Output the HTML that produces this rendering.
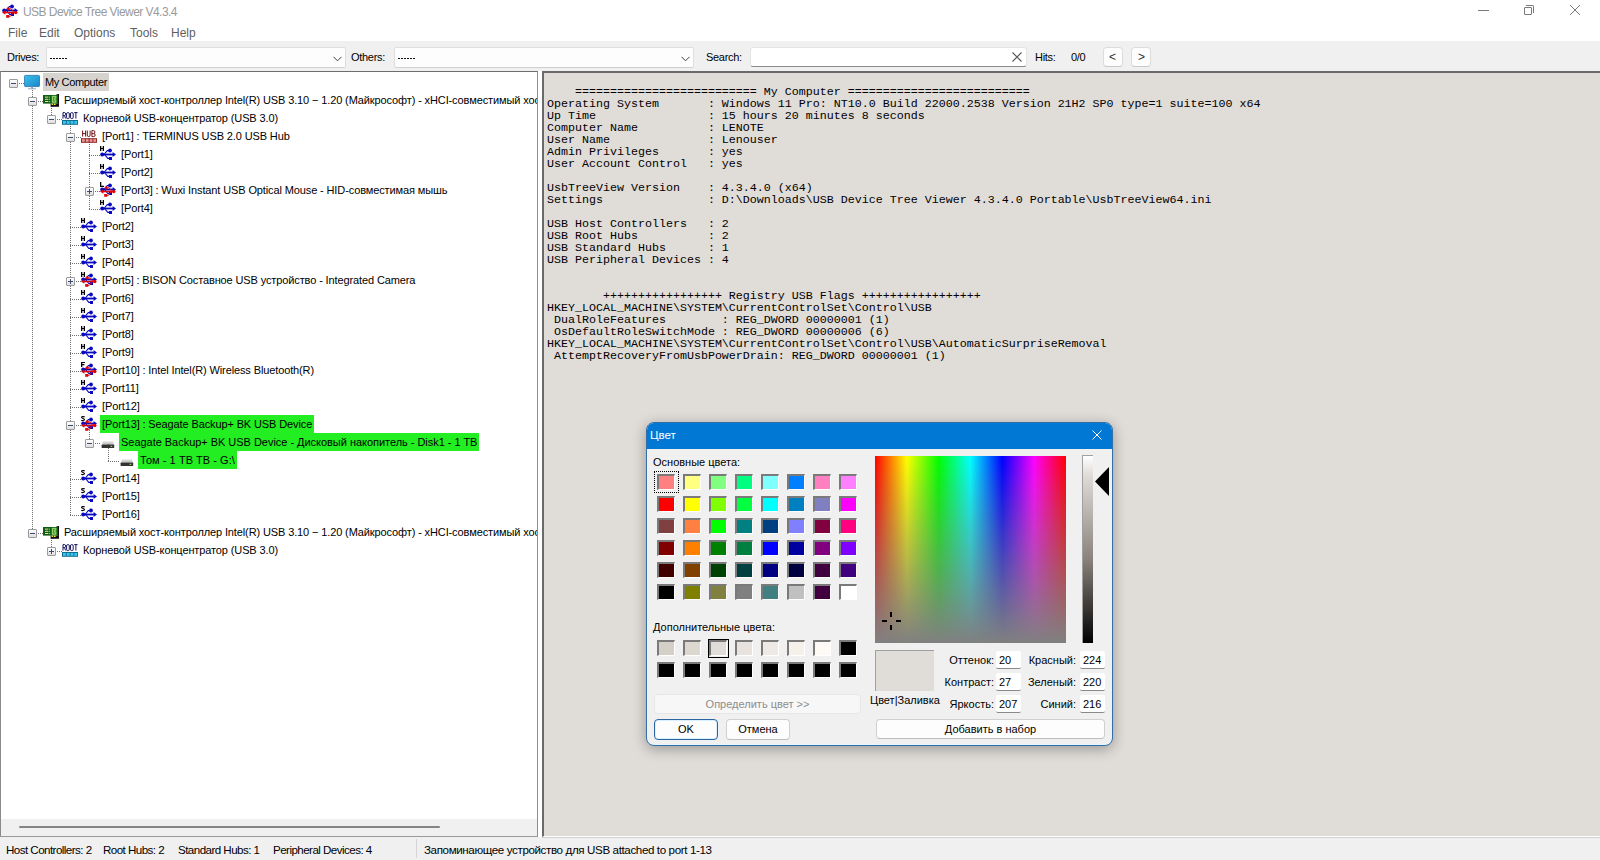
<!DOCTYPE html><html><head><meta charset="utf-8"><title>USB Device Tree Viewer</title><style>
*{margin:0;padding:0;box-sizing:border-box}
html,body{width:1600px;height:860px;overflow:hidden;background:#fff}
body{position:relative;font-family:"Liberation Sans",sans-serif;color:#000}
.abs{position:absolute}
.t{position:absolute;white-space:pre;line-height:1}
#title{left:0;top:0;width:1600px;height:41px;background:#fff}
#menu span{position:absolute;top:26px;font-size:12px;color:#5f5f5f;line-height:14px}
#tb{left:0;top:41px;width:1600px;height:30px;background:#f0f0f0}
.lbl{position:absolute;font-size:11px;letter-spacing:-0.3px;line-height:13px;color:#000}
.combo{position:absolute;top:47px;height:21px;background:#fdfdfd;border:1px solid #dedede;border-bottom-color:#cfcfcf;border-radius:2px}
.combo .dash{position:absolute;left:4px;top:10px;height:1px;background-image:linear-gradient(90deg,#111 75%,transparent 75%);background-size:3px 1px}
.btn{position:absolute;background:#fdfdfd;border:1px solid #dcdcdc;border-bottom-color:#c8c8c8;border-radius:4px}
#tree{left:0;top:71px;width:538px;height:766px;background:#fff;border-top:1px solid #6d6d6d;border-left:1px solid #8a8a8a;border-right:1px solid #8d8d8d;border-bottom:1px solid #9a9a9a;overflow:hidden}
.row{position:absolute;font-size:11px;letter-spacing:-0.12px;line-height:17px;height:18px;white-space:pre;color:#000;padding:1px 2px 0 2px}
.exp{position:absolute;width:9px;height:9px;border:1px solid #9b9b9b;border-radius:1px;background:linear-gradient(#fff,#dedede)}
.exp::before{content:"";position:absolute;left:1px;top:3px;width:5px;height:1px;background:#3b4a70}
.exp.p::after{content:"";position:absolute;left:3px;top:1px;width:1px;height:5px;background:#3b4a70}
.vl{position:absolute;width:1px;background-image:linear-gradient(#707070 50%,transparent 50%);background-size:1px 2px}
.hl{position:absolute;height:1px;background-image:linear-gradient(90deg,#707070 50%,transparent 50%);background-size:2px 1px}
#right{left:542px;top:71px;width:1058px;height:766px;background:#e0dcd8;border-top:2px solid #6a6a6a;border-left:2px solid #6a6a6a;border-bottom:1px solid #fff}
#mono{position:absolute;left:3px;top:13px;font-family:"Liberation Mono",monospace;font-size:11.67px;line-height:12px;white-space:pre;color:#000}
#status{left:0;top:837px;width:1600px;height:23px;background:#f0f0f0}
#status span{position:absolute;top:6px;font-size:11.6px;letter-spacing:-0.55px;line-height:13px}
#dlg{left:646px;top:422px;width:467px;height:324px;background:#f0f0f0;border:1px solid #336ea8;border-radius:8px;overflow:hidden;box-shadow:0 3px 14px rgba(0,0,0,0.32),inset 0 0 0 1px #e4f6ff}
#dlgt{position:absolute;left:0;top:0;width:100%;height:26px;background:#0078d4}
.dl{position:absolute;font-size:11px;line-height:13px;white-space:pre;color:#000}
.sw{position:absolute;width:18px;height:16px;border-top:2px solid #7a7a7a;border-left:2px solid #7a7a7a;border-right:1px solid #fff;border-bottom:1px solid #fff}
.ed{position:absolute;width:25px;height:18px;background:#fff;border-bottom:1px solid #8a8a8a;border-radius:2px}
.ed span{position:absolute;left:3px;top:3px;font-size:11px;line-height:13px}
.dbtn{position:absolute;background:#fdfdfd;border:1px solid #d0d0d0;border-bottom-color:#bdbdbd;border-radius:4px;font-size:11px;text-align:center}
</style></head><body>
<svg width="0" height="0" style="position:absolute">
<defs>
<linearGradient id="gmon" x1="0" y1="0" x2="1" y2="1"><stop offset="0" stop-color="#3cc4ec"/><stop offset="1" stop-color="#1a84c8"/></linearGradient>
<symbol id="i-comp" viewBox="0 0 16 16"><rect x="0.4" y="1.4" width="15.2" height="11.2" rx="1.2" fill="url(#gmon)" stroke="#1f6fa8" stroke-width="0.8"/><rect x="7" y="12.6" width="2" height="1.8" fill="#98aabb"/><rect x="4" y="14.3" width="8" height="1" fill="#98aabb"/></symbol>
<symbol id="i-ctrl" viewBox="0 0 16 16"><rect x="0" y="3" width="15" height="8.6" fill="#0b5e12"/><rect x="15" y="2.2" width="1" height="12.6" fill="#111"/><rect x="13.5" y="2.2" width="2.5" height="1" fill="#111"/><rect x="2" y="4.6" width="3.2" height="1" fill="#e6dc9a"/><rect x="2" y="6.8" width="3.2" height="1" fill="#e6dc9a"/><rect x="2" y="9" width="3.2" height="1" fill="#e6dc9a"/><rect x="5.8" y="4.6" width="1" height="1" fill="#e6dc9a"/><rect x="5.8" y="6.8" width="1" height="1" fill="#e6dc9a"/><rect x="5.8" y="9" width="1" height="1" fill="#e6dc9a"/><rect x="8.6" y="3.6" width="5" height="7.4" fill="#3f9a3a"/><path d="M9.4 4.4H12.8V6.2H11.6V8.2H12.8V10.2H9.4Z" fill="none" stroke="#b4e67a" stroke-width="0.8"/><rect x="7.6" y="11.6" width="7.4" height="3.2" fill="#111"/><rect x="8.6" y="11.6" width="1.6" height="1.4" fill="#f2ee3a"/><rect x="11" y="11.6" width="1.6" height="1.4" fill="#f2ee3a"/></symbol>
<symbol id="i-root" viewBox="0 0 16 16"><g fill="none" stroke="#0c0c58" stroke-width="0.95"><path d="M1 8.6V2.6H2.8C4 2.6 4 5.6 2.8 5.6H1M2.5 5.6L3.7 8.6"/><path d="M5.6 2.6H6.3Q7.3 2.6 7.3 4V7.2Q7.3 8.6 6.3 8.6H5.6Q4.6 8.6 4.6 7.2V4Q4.6 2.6 5.6 2.6Z"/><path d="M9.5 2.6H10.2Q11.2 2.6 11.2 4V7.2Q11.2 8.6 10.2 8.6H9.5Q8.5 8.6 8.5 7.2V4Q8.5 2.6 9.5 2.6Z"/><path d="M12.2 2.6H15.6M13.9 2.6V8.6"/></g><rect x="0" y="10" width="16" height="4.8" fill="#0f6f92"/><rect x="1" y="11" width="2.8" height="2.8" fill="#3cc8ee"/><rect x="4.8" y="11" width="2.8" height="2.8" fill="#3cc8ee"/><rect x="8.6" y="11" width="2.8" height="2.8" fill="#3cc8ee"/><rect x="12.3" y="11" width="2.8" height="2.8" fill="#3cc8ee"/></symbol>
<symbol id="i-hub" viewBox="0 0 16 16"><g fill="none" stroke="#6a0a0a" stroke-width="0.95"><path d="M1.6 2.6V8.6M4.6 2.6V8.6M1.6 5.6H4.6"/><path d="M6.3 2.6V7.1Q6.3 8.6 7.7 8.6Q9.1 8.6 9.1 7.1V2.6"/><path d="M10.9 8.6V2.6H12.6Q13.9 2.6 13.9 4.1Q13.9 5.6 12.6 5.6H10.9M12.6 5.6Q14.2 5.6 14.2 7.1Q14.2 8.6 12.6 8.6H10.9"/></g><rect x="0" y="10.2" width="16" height="4.6" fill="#8a2424"/><rect x="1" y="11.2" width="2.8" height="2.6" fill="#f39a9a"/><rect x="4.8" y="11.2" width="2.8" height="2.6" fill="#f39a9a"/><rect x="8.6" y="11.2" width="2.8" height="2.6" fill="#f39a9a"/><rect x="12.3" y="11.2" width="2.8" height="2.6" fill="#f39a9a"/></symbol>
<symbol id="i-usbb" viewBox="0 0 16 16"><g fill="#0808c0"><rect x="1" y="7.6" width="13" height="1.8"/><path d="M12.6 6L16 8.5L12.6 11Z"/><circle cx="2.2" cy="8.5" r="2"/><path d="M4 8.5L7.3 4.6H9" stroke="#0808c0" stroke-width="1.1" fill="none"/><circle cx="10" cy="4.5" r="1.9"/><path d="M4.5 8.5L7.8 12.4H9.2" stroke="#0808c0" stroke-width="1.1" fill="none"/><rect x="9" y="11" width="3" height="3"/></g></symbol>
<symbol id="i-usbr" viewBox="0 0 16 16"><g fill="#e00808"><rect x="2" y="8.8" width="12" height="1.5"/><path d="M3.4 7.2L0 9.5L3.4 11.8Z"/><circle cx="13.8" cy="9.5" r="1.7"/><path d="M12 9.5L8.7 5.8H7.2" stroke="#e00808" stroke-width="1" fill="none"/><circle cx="6.2" cy="5.8" r="1.6"/><path d="M11.5 9.5L8.4 13.3H7" stroke="#e00808" stroke-width="1" fill="none"/><rect x="4.2" y="12" width="3" height="2.8"/></g></symbol>
<linearGradient id="gdrv" x1="0" y1="0" x2="0" y2="1"><stop offset="0" stop-color="#e8e8e8"/><stop offset="1" stop-color="#b8b8b8"/></linearGradient>
<symbol id="i-drive" viewBox="0 0 16 16"><path d="M2.2 10.6L3 7.2H13L13.8 10.6Z" fill="url(#gdrv)"/><rect x="1.6" y="10.5" width="12.6" height="3.6" rx="0.7" fill="#333"/><rect x="10.6" y="11.8" width="1.6" height="1.1" fill="#7ee060"/></symbol>
</defs></svg>
<div id="title" class="abs">
<svg class="abs" style="left:2px;top:3px" width="16" height="16"><use href="#i-usbb" y="-1"/><use href="#i-usbr"/></svg>
<span class="t" style="left:23px;top:6px;font-size:12px;letter-spacing:-0.55px;color:#9a9a9a">USB Device Tree Viewer V4.3.4</span>
<div class="abs" style="left:1478px;top:10px;width:11px;height:1px;background:#7a7a7a"></div>
<div class="abs" style="left:1524px;top:7px;width:8px;height:8px;border:1px solid #7a7a7a;border-radius:1px"></div>
<div class="abs" style="left:1526px;top:5px;width:8px;height:8px;border-top:1px solid #7a7a7a;border-right:1px solid #7a7a7a;border-radius:0 2px 0 0"></div>
<svg class="abs" style="left:1569px;top:4px" width="12" height="12" viewBox="0 0 12 12"><path d="M1 1L11 11M11 1L1 11" stroke="#7a7a7a" stroke-width="1"/></svg>
</div>
<div id="menu">
<span style="left:8px">File</span>
<span style="left:39px">Edit</span>
<span style="left:74px">Options</span>
<span style="left:130px">Tools</span>
<span style="left:171px">Help</span>
</div>
<div id="tb" class="abs"></div>
<span class="lbl" style="left:7px;top:51px">Drives:</span>
<div class="combo" style="left:46px;width:300px"><div class="dash" style="width:18px;left:3px"></div><svg class="abs" style="left:286px;top:8px" width="9" height="6" viewBox="0 0 9 6"><path d="M0.5 0.8L4.5 4.8L8.5 0.8" stroke="#404040" stroke-width="1" fill="none"/></svg></div>
<span class="lbl" style="left:351px;top:51px">Others:</span>
<div class="combo" style="left:394px;width:300px"><div class="dash" style="width:18px;left:3px"></div><svg class="abs" style="left:286px;top:8px" width="9" height="6" viewBox="0 0 9 6"><path d="M0.5 0.8L4.5 4.8L8.5 0.8" stroke="#404040" stroke-width="1" fill="none"/></svg></div>
<span class="lbl" style="left:706px;top:51px">Search:</span>
<div class="abs" style="left:750px;top:47px;width:277px;height:20px;background:#fff;border:1px solid #e4e4e4;border-bottom:1px solid #8a8a8a;border-radius:3px"><svg class="abs" style="left:261px;top:4px" width="10" height="10" viewBox="0 0 10 10"><path d="M0.5 0.5L9.5 9.5M9.5 0.5L0.5 9.5" stroke="#555" stroke-width="1.1"/></svg></div>
<span class="lbl" style="left:1035px;top:51px">Hits:</span>
<span class="lbl" style="left:1071px;top:51px">0/0</span>
<div class="btn" style="left:1103px;top:47px;width:20px;height:20px"><span class="lbl" style="left:5px;top:3px;font-size:12px;color:#333">&lt;</span></div>
<div class="btn" style="left:1131px;top:47px;width:20px;height:20px"><span class="lbl" style="left:6px;top:3px;font-size:12px;color:#333">&gt;</span></div>
<div id="tree" class="abs">
<div class="vl" style="left:31px;top:12px;height:450px"></div>
<div class="vl" style="left:50px;top:30px;height:18px"></div>
<div class="vl" style="left:69px;top:48px;height:396px"></div>
<div class="vl" style="left:88px;top:66px;height:72px"></div>
<div class="vl" style="left:88px;top:354px;height:18px"></div>
<div class="vl" style="left:107px;top:372px;height:18px"></div>
<div class="vl" style="left:50px;top:462px;height:18px"></div>
<div class="hl" style="left:12px;top:11px;width:11px"></div>
<div class="exp" style="left:8px;top:7px"></div>
<svg class="abs" style="left:23px;top:2px" width="16" height="16"><use href="#i-comp"/></svg>
<div class="row" style="left:42px;top:1px;background:#d6d3ce;letter-spacing:-0.37px;">My Computer</div>
<div class="hl" style="left:31px;top:29px;width:11px"></div>
<div class="exp" style="left:27px;top:25px"></div>
<svg class="abs" style="left:42px;top:20px" width="16" height="16"><use href="#i-ctrl"/></svg>
<div class="row" style="left:61px;top:19px;">Расширяемый хост-контроллер Intel(R) USB 3.10 − 1.20 (Майкрософт) - xHCI-совместимый хост-контроллер</div>
<div class="hl" style="left:50px;top:47px;width:11px"></div>
<div class="exp" style="left:46px;top:43px"></div>
<svg class="abs" style="left:61px;top:38px" width="16" height="16"><use href="#i-root"/></svg>
<div class="row" style="left:80px;top:37px;">Корневой USB-концентратор (USB 3.0)</div>
<div class="hl" style="left:69px;top:65px;width:11px"></div>
<div class="exp" style="left:65px;top:61px"></div>
<svg class="abs" style="left:80px;top:56px" width="16" height="16"><use href="#i-hub"/></svg>
<div class="row" style="left:99px;top:55px;">[Port1] : TERMINUS USB 2.0 USB Hub</div>
<div class="hl" style="left:88px;top:83px;width:11px"></div>
<svg class="abs" style="left:99px;top:74px" width="16" height="16"><use href="#i-usbb"/><path d="M0 0h1.3v5H0zM2.7 0H4v5H2.7zM0 2h4v1.1H0z" fill="#000"/></svg>
<div class="row" style="left:118px;top:73px;">[Port1]</div>
<div class="hl" style="left:88px;top:101px;width:11px"></div>
<svg class="abs" style="left:99px;top:92px" width="16" height="16"><use href="#i-usbb"/><path d="M0 0h1.3v5H0zM2.7 0H4v5H2.7zM0 2h4v1.1H0z" fill="#000"/></svg>
<div class="row" style="left:118px;top:91px;">[Port2]</div>
<div class="hl" style="left:88px;top:119px;width:11px"></div>
<div class="exp p" style="left:84px;top:115px"></div>
<svg class="abs" style="left:99px;top:110px" width="16" height="16"><use href="#i-usbb" y="-1"/><use href="#i-usbr"/><path d="M0 0h1.3v5H0zM0 3.8h4v1.2H0z" fill="#000"/></svg>
<div class="row" style="left:118px;top:109px;">[Port3] : Wuxi Instant USB Optical Mouse - HID-совместимая мышь</div>
<div class="hl" style="left:88px;top:137px;width:11px"></div>
<svg class="abs" style="left:99px;top:128px" width="16" height="16"><use href="#i-usbb"/><path d="M0 0h1.3v5H0zM2.7 0H4v5H2.7zM0 2h4v1.1H0z" fill="#000"/></svg>
<div class="row" style="left:118px;top:127px;">[Port4]</div>
<div class="hl" style="left:69px;top:155px;width:11px"></div>
<svg class="abs" style="left:80px;top:146px" width="16" height="16"><use href="#i-usbb"/><path d="M0 0h1.3v5H0zM2.7 0H4v5H2.7zM0 2h4v1.1H0z" fill="#000"/></svg>
<div class="row" style="left:99px;top:145px;">[Port2]</div>
<div class="hl" style="left:69px;top:173px;width:11px"></div>
<svg class="abs" style="left:80px;top:164px" width="16" height="16"><use href="#i-usbb"/><path d="M0 0h1.3v5H0zM2.7 0H4v5H2.7zM0 2h4v1.1H0z" fill="#000"/></svg>
<div class="row" style="left:99px;top:163px;">[Port3]</div>
<div class="hl" style="left:69px;top:191px;width:11px"></div>
<svg class="abs" style="left:80px;top:182px" width="16" height="16"><use href="#i-usbb"/><path d="M0 0h1.3v5H0zM2.7 0H4v5H2.7zM0 2h4v1.1H0z" fill="#000"/></svg>
<div class="row" style="left:99px;top:181px;">[Port4]</div>
<div class="hl" style="left:69px;top:209px;width:11px"></div>
<div class="exp p" style="left:65px;top:205px"></div>
<svg class="abs" style="left:80px;top:200px" width="16" height="16"><use href="#i-usbb" y="-1"/><use href="#i-usbr"/><path d="M0 0h1.3v5H0zM2.7 0H4v5H2.7zM0 2h4v1.1H0z" fill="#000"/></svg>
<div class="row" style="left:99px;top:199px;">[Port5] : BISON Составное USB устройство - Integrated Camera</div>
<div class="hl" style="left:69px;top:227px;width:11px"></div>
<svg class="abs" style="left:80px;top:218px" width="16" height="16"><use href="#i-usbb"/><path d="M0 0h1.3v5H0zM2.7 0H4v5H2.7zM0 2h4v1.1H0z" fill="#000"/></svg>
<div class="row" style="left:99px;top:217px;">[Port6]</div>
<div class="hl" style="left:69px;top:245px;width:11px"></div>
<svg class="abs" style="left:80px;top:236px" width="16" height="16"><use href="#i-usbb"/><path d="M0 0h1.3v5H0zM2.7 0H4v5H2.7zM0 2h4v1.1H0z" fill="#000"/></svg>
<div class="row" style="left:99px;top:235px;">[Port7]</div>
<div class="hl" style="left:69px;top:263px;width:11px"></div>
<svg class="abs" style="left:80px;top:254px" width="16" height="16"><use href="#i-usbb"/><path d="M0 0h1.3v5H0zM2.7 0H4v5H2.7zM0 2h4v1.1H0z" fill="#000"/></svg>
<div class="row" style="left:99px;top:253px;">[Port8]</div>
<div class="hl" style="left:69px;top:281px;width:11px"></div>
<svg class="abs" style="left:80px;top:272px" width="16" height="16"><use href="#i-usbb"/><path d="M0 0h1.3v5H0zM2.7 0H4v5H2.7zM0 2h4v1.1H0z" fill="#000"/></svg>
<div class="row" style="left:99px;top:271px;">[Port9]</div>
<div class="hl" style="left:69px;top:299px;width:11px"></div>
<svg class="abs" style="left:80px;top:290px" width="16" height="16"><use href="#i-usbb" y="-1"/><use href="#i-usbr"/><path d="M0 0h1.3v5H0zM0 0h4v1.1H0zM0 2.1h3.4v1.1H0z" fill="#000"/></svg>
<div class="row" style="left:99px;top:289px;">[Port10] : Intel Intel(R) Wireless Bluetooth(R)</div>
<div class="hl" style="left:69px;top:317px;width:11px"></div>
<svg class="abs" style="left:80px;top:308px" width="16" height="16"><use href="#i-usbb"/><path d="M0 0h1.3v5H0zM2.7 0H4v5H2.7zM0 2h4v1.1H0z" fill="#000"/></svg>
<div class="row" style="left:99px;top:307px;">[Port11]</div>
<div class="hl" style="left:69px;top:335px;width:11px"></div>
<svg class="abs" style="left:80px;top:326px" width="16" height="16"><use href="#i-usbb"/><path d="M0 0h1.3v5H0zM2.7 0H4v5H2.7zM0 2h4v1.1H0z" fill="#000"/></svg>
<div class="row" style="left:99px;top:325px;">[Port12]</div>
<div class="hl" style="left:69px;top:353px;width:11px"></div>
<div class="exp" style="left:65px;top:349px"></div>
<svg class="abs" style="left:80px;top:344px" width="16" height="16"><use href="#i-usbb" y="-1"/><use href="#i-usbr"/><path d="M3.6 1.1C3.2 0.4 0.5 0.3 0.6 1.5C0.7 2.6 3.4 2.3 3.5 3.5C3.6 4.8 0.8 4.8 0.3 4" stroke="#000" stroke-width="1.15" fill="none"/></svg>
<div class="row" style="left:99px;top:343px;background:#22ee22;">[Port13] : Seagate Backup+ BK USB Device</div>
<div class="hl" style="left:88px;top:371px;width:11px"></div>
<div class="exp" style="left:84px;top:367px"></div>
<svg class="abs" style="left:99px;top:362px" width="16" height="16"><use href="#i-drive"/></svg>
<div class="row" style="left:118px;top:361px;background:#22ee22;letter-spacing:-0.03px;">Seagate Backup+ BK USB Device - Дисковый накопитель - Disk1 - 1 TB</div>
<div class="hl" style="left:107px;top:389px;width:11px"></div>
<svg class="abs" style="left:118px;top:380px" width="16" height="16"><use href="#i-drive"/></svg>
<div class="row" style="left:137px;top:379px;background:#22ee22;letter-spacing:0.05px;">Том - 1 TB TB - G:\</div>
<div class="hl" style="left:69px;top:407px;width:11px"></div>
<svg class="abs" style="left:80px;top:398px" width="16" height="16"><use href="#i-usbb"/><path d="M3.6 1.1C3.2 0.4 0.5 0.3 0.6 1.5C0.7 2.6 3.4 2.3 3.5 3.5C3.6 4.8 0.8 4.8 0.3 4" stroke="#000" stroke-width="1.15" fill="none"/></svg>
<div class="row" style="left:99px;top:397px;">[Port14]</div>
<div class="hl" style="left:69px;top:425px;width:11px"></div>
<svg class="abs" style="left:80px;top:416px" width="16" height="16"><use href="#i-usbb"/><path d="M3.6 1.1C3.2 0.4 0.5 0.3 0.6 1.5C0.7 2.6 3.4 2.3 3.5 3.5C3.6 4.8 0.8 4.8 0.3 4" stroke="#000" stroke-width="1.15" fill="none"/></svg>
<div class="row" style="left:99px;top:415px;">[Port15]</div>
<div class="hl" style="left:69px;top:443px;width:11px"></div>
<svg class="abs" style="left:80px;top:434px" width="16" height="16"><use href="#i-usbb"/><path d="M3.6 1.1C3.2 0.4 0.5 0.3 0.6 1.5C0.7 2.6 3.4 2.3 3.5 3.5C3.6 4.8 0.8 4.8 0.3 4" stroke="#000" stroke-width="1.15" fill="none"/></svg>
<div class="row" style="left:99px;top:433px;">[Port16]</div>
<div class="hl" style="left:31px;top:461px;width:11px"></div>
<div class="exp" style="left:27px;top:457px"></div>
<svg class="abs" style="left:42px;top:452px" width="16" height="16"><use href="#i-ctrl"/></svg>
<div class="row" style="left:61px;top:451px;">Расширяемый хост-контроллер Intel(R) USB 3.10 − 1.20 (Майкрософт) - xHCI-совместимый хост-контроллер</div>
<div class="hl" style="left:50px;top:479px;width:11px"></div>
<div class="exp p" style="left:46px;top:475px"></div>
<svg class="abs" style="left:61px;top:470px" width="16" height="16"><use href="#i-root"/></svg>
<div class="row" style="left:80px;top:469px;">Корневой USB-концентратор (USB 3.0)</div>
<div class="abs" style="left:0;top:747px;width:536px;height:17px;background:#f0f0f0"></div>
<div class="abs" style="left:18px;top:754px;width:421px;height:2px;background:#858585;border-radius:1px"></div>
</div>
<div id="right" class="abs"><div id="mono">    ========================== My Computer ==========================
Operating System       : Windows 11 Pro: NT10.0 Build 22000.2538 Version 21H2 SP0 type=1 suite=100 x64
Up Time                : 15 hours 20 minutes 8 seconds
Computer Name          : LENOTE
User Name              : Lenouser
Admin Privileges       : yes
User Account Control   : yes

UsbTreeView Version    : 4.3.4.0 (x64)
Settings               : D:\Downloads\USB Device Tree Viewer 4.3.4.0 Portable\UsbTreeView64.ini

USB Host Controllers   : 2
USB Root Hubs          : 2
USB Standard Hubs      : 1
USB Peripheral Devices : 4


        +++++++++++++++++ Registry USB Flags +++++++++++++++++
HKEY_LOCAL_MACHINE\SYSTEM\CurrentControlSet\Control\USB
 DualRoleFeatures        : REG_DWORD 00000001 (1)
 OsDefaultRoleSwitchMode : REG_DWORD 00000006 (6)
HKEY_LOCAL_MACHINE\SYSTEM\CurrentControlSet\Control\USB\AutomaticSurpriseRemoval
 AttemptRecoveryFromUsbPowerDrain: REG_DWORD 00000001 (1)</div></div>
<div id="status" class="abs">
<div class="abs" style="left:542px;top:0;width:1058px;height:1px;background:#d0d0d0"></div>
<span style="left:6px">Host Controllers: 2</span>
<span style="left:103px">Root Hubs: 2</span>
<span style="left:178px">Standard Hubs: 1</span>
<span style="left:273px">Peripheral Devices: 4</span>
<span style="left:424px;letter-spacing:-0.38px">Запоминающее устройство для USB attached to port 1-13</span>
<div class="abs" style="left:416px;top:2px;width:1px;height:19px;background:#d4d4d4"></div>
</div>
<div id="dlg" class="abs">
<div id="dlgt"></div>
<span class="dl" style="left:3px;top:6px;color:#fff;font-size:11.5px">Цвет</span>
<svg class="abs" style="left:445px;top:7px" width="10" height="10" viewBox="0 0 10 10"><path d="M0.5 0.5L9.5 9.5M9.5 0.5L0.5 9.5" stroke="#fff" stroke-width="1"/></svg>
<span class="dl" style="left:6px;top:33px">Основные цвета:</span>
<div class="sw" style="left:10px;top:51px;background:#ff8080"></div>
<div class="sw" style="left:36px;top:51px;background:#ffff80"></div>
<div class="sw" style="left:62px;top:51px;background:#80ff80"></div>
<div class="sw" style="left:88px;top:51px;background:#00ff80"></div>
<div class="sw" style="left:114px;top:51px;background:#80ffff"></div>
<div class="sw" style="left:140px;top:51px;background:#0080ff"></div>
<div class="sw" style="left:166px;top:51px;background:#ff80c0"></div>
<div class="sw" style="left:192px;top:51px;background:#ff80ff"></div>
<div class="sw" style="left:10px;top:73px;background:#ff0000"></div>
<div class="sw" style="left:36px;top:73px;background:#ffff00"></div>
<div class="sw" style="left:62px;top:73px;background:#80ff00"></div>
<div class="sw" style="left:88px;top:73px;background:#00ff40"></div>
<div class="sw" style="left:114px;top:73px;background:#00ffff"></div>
<div class="sw" style="left:140px;top:73px;background:#0080c0"></div>
<div class="sw" style="left:166px;top:73px;background:#8080c0"></div>
<div class="sw" style="left:192px;top:73px;background:#ff00ff"></div>
<div class="sw" style="left:10px;top:95px;background:#804040"></div>
<div class="sw" style="left:36px;top:95px;background:#ff8040"></div>
<div class="sw" style="left:62px;top:95px;background:#00ff00"></div>
<div class="sw" style="left:88px;top:95px;background:#008080"></div>
<div class="sw" style="left:114px;top:95px;background:#004080"></div>
<div class="sw" style="left:140px;top:95px;background:#8080ff"></div>
<div class="sw" style="left:166px;top:95px;background:#800040"></div>
<div class="sw" style="left:192px;top:95px;background:#ff0080"></div>
<div class="sw" style="left:10px;top:117px;background:#800000"></div>
<div class="sw" style="left:36px;top:117px;background:#ff8000"></div>
<div class="sw" style="left:62px;top:117px;background:#008000"></div>
<div class="sw" style="left:88px;top:117px;background:#008040"></div>
<div class="sw" style="left:114px;top:117px;background:#0000ff"></div>
<div class="sw" style="left:140px;top:117px;background:#0000a0"></div>
<div class="sw" style="left:166px;top:117px;background:#800080"></div>
<div class="sw" style="left:192px;top:117px;background:#8000ff"></div>
<div class="sw" style="left:10px;top:139px;background:#400000"></div>
<div class="sw" style="left:36px;top:139px;background:#804000"></div>
<div class="sw" style="left:62px;top:139px;background:#004000"></div>
<div class="sw" style="left:88px;top:139px;background:#004040"></div>
<div class="sw" style="left:114px;top:139px;background:#000080"></div>
<div class="sw" style="left:140px;top:139px;background:#000040"></div>
<div class="sw" style="left:166px;top:139px;background:#400040"></div>
<div class="sw" style="left:192px;top:139px;background:#400080"></div>
<div class="sw" style="left:10px;top:161px;background:#000000"></div>
<div class="sw" style="left:36px;top:161px;background:#808000"></div>
<div class="sw" style="left:62px;top:161px;background:#808040"></div>
<div class="sw" style="left:88px;top:161px;background:#808080"></div>
<div class="sw" style="left:114px;top:161px;background:#408080"></div>
<div class="sw" style="left:140px;top:161px;background:#c0c0c0"></div>
<div class="sw" style="left:166px;top:161px;background:#400040"></div>
<div class="sw" style="left:192px;top:161px;background:#ffffff"></div>
<div class="abs" style="left:7px;top:48px;width:25px;height:22px;border:1px dotted #000"></div>
<span class="dl" style="left:6px;top:198px">Дополнительные цвета:</span>
<div class="sw" style="left:10px;top:217px;background:#d4d0c8"></div>
<div class="sw" style="left:10px;top:239px;background:#000"></div>
<div class="sw" style="left:36px;top:217px;background:#dcd8d0"></div>
<div class="sw" style="left:36px;top:239px;background:#000"></div>
<div class="sw" style="left:62px;top:217px;background:#e0dcd8"></div>
<div class="sw" style="left:62px;top:239px;background:#000"></div>
<div class="sw" style="left:88px;top:217px;background:#e8e2de"></div>
<div class="sw" style="left:88px;top:239px;background:#000"></div>
<div class="sw" style="left:114px;top:217px;background:#efe9e5"></div>
<div class="sw" style="left:114px;top:239px;background:#000"></div>
<div class="sw" style="left:140px;top:217px;background:#f6f0ea"></div>
<div class="sw" style="left:140px;top:239px;background:#000"></div>
<div class="sw" style="left:166px;top:217px;background:#fdf9f4"></div>
<div class="sw" style="left:166px;top:239px;background:#000"></div>
<div class="sw" style="left:192px;top:217px;background:#000000"></div>
<div class="sw" style="left:192px;top:239px;background:#000"></div>
<div class="abs" style="left:61px;top:216px;width:21px;height:19px;border:1px solid #000"></div>
<div class="dbtn" style="left:7px;top:271px;width:207px;height:20px;border-color:#e6e6e6;background:#f7f7f7;color:#8d8d8d;line-height:18px">Определить цвет &gt;&gt;</div>
<div class="dbtn" style="left:7px;top:296px;width:64px;height:21px;border:1px solid #2d65a0;box-shadow:inset 0 0 0 1px #d8f0ff;line-height:19px">OK</div>
<div class="dbtn" style="left:79px;top:296px;width:64px;height:21px;line-height:19px">Отмена</div>
<div class="abs" style="left:228px;top:33px;width:191px;height:187px;background:linear-gradient(to bottom,rgba(128,128,128,0) 0%,rgba(128,128,128,1) 100%),linear-gradient(to right,#ff0000 0%,#ffff00 16.67%,#00ff00 33.33%,#00ffff 50%,#0000ff 66.67%,#ff00ff 83.33%,#ff0000 100%)"></div>
<div class="abs" style="left:243px;top:189px;width:2px;height:5px;background:#000"></div>
<div class="abs" style="left:243px;top:202px;width:2px;height:5px;background:#000"></div>
<div class="abs" style="left:235px;top:197px;width:5px;height:2px;background:#000"></div>
<div class="abs" style="left:249px;top:197px;width:5px;height:2px;background:#000"></div>
<div class="abs" style="left:435px;top:32px;width:11px;height:188px;border-top:1px solid #a0a0a0;border-left:1px solid #a0a0a0;background:linear-gradient(to bottom,#fff 0%,#e0dcd8 10%,#8a837c 55%,#000 100%)"></div>
<svg class="abs" style="left:448px;top:44px" width="15" height="29" viewBox="0 0 15 29"><path d="M0 14.5L14 0V29Z" fill="#000"/></svg>
<div class="abs" style="left:228px;top:227px;width:59px;height:41px;background:#e0dcd8;border-top:1px solid #a0a0a0;border-left:1px solid #a0a0a0"></div>
<span class="dl" style="left:223px;top:271px">Цвет|Заливка</span>
<span class="dl" style="left:247px;top:231px;width:100px;text-align:right">Оттенок:</span>
<div class="ed" style="left:349px;top:228px"><span>20</span></div>
<span class="dl" style="left:329px;top:231px;width:100px;text-align:right">Красный:</span>
<div class="ed" style="left:433px;top:228px"><span>224</span></div>
<span class="dl" style="left:247px;top:253px;width:100px;text-align:right">Контраст:</span>
<div class="ed" style="left:349px;top:250px"><span>27</span></div>
<span class="dl" style="left:329px;top:253px;width:100px;text-align:right">Зеленый:</span>
<div class="ed" style="left:433px;top:250px"><span>220</span></div>
<span class="dl" style="left:247px;top:275px;width:100px;text-align:right">Яркость:</span>
<div class="ed" style="left:349px;top:272px"><span>207</span></div>
<span class="dl" style="left:329px;top:275px;width:100px;text-align:right">Синий:</span>
<div class="ed" style="left:433px;top:272px"><span>216</span></div>
<div class="dbtn" style="left:229px;top:296px;width:229px;height:20px;line-height:18px">Добавить в набор</div>
</div>
</body></html>
